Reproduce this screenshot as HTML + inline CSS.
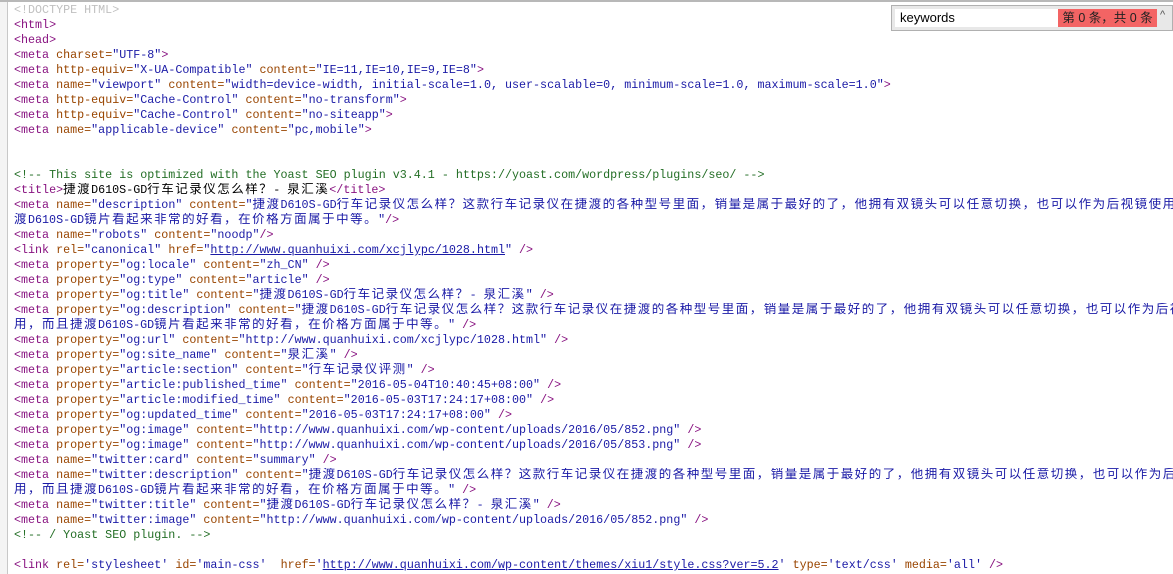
<!DOCTYPE html>
<html><head><meta charset="utf-8"><style>
html,body{margin:0;padding:0;background:#fff;width:1173px;height:574px;overflow:hidden;}
body{position:relative;font-family:"Liberation Mono","Noto Sans CJK SC",monospace;font-size:11.7px;}
.top{position:absolute;left:0;top:0;width:1173px;height:2px;background:#b8b8b8;}
.gut{position:absolute;left:0;top:2px;width:7px;height:572px;background:#f4f4f4;border-right:1px solid #c8c8c8;}
.code{position:absolute;left:14px;top:3px;width:1159px;}
.l{height:15px;line-height:15px;white-space:pre;overflow:hidden;color:#000;}
.t{color:#881280}.a{color:#994500}.v{color:#1a1aa6}.m{color:#236e25}.d{color:#c0c0c0}
.c{font-family:"Noto Sans CJK SC",sans-serif;font-size:12.5px;letter-spacing:1.5px;line-height:0}
.u{text-decoration:underline;color:#1a1aa6}
.sb{position:absolute;left:891px;top:5px;width:282px;height:26px;background:#e8e8e8;border:1px solid #b0b0b0;box-sizing:border-box;}
.sb .in{position:absolute;left:3px;top:3px;width:262px;height:18px;background:#fff;font-family:"Liberation Sans",sans-serif;font-size:13px;line-height:18px;padding-left:5px;box-sizing:border-box;color:#000}
.sb .r{position:absolute;left:163px;top:0;width:99px;height:18px;background:#f36464;font-family:"Liberation Sans","Noto Sans CJK SC",sans-serif;font-size:12.5px;line-height:18px;color:#222;text-align:center}
.sb .btn{position:absolute;left:268px;top:3px;font-size:11px;color:#555;font-family:"Liberation Sans",sans-serif}
</style></head><body>
<div class="top"></div><div class="gut"></div>
<div class="code">
<div class="l d">&lt;!DOCTYPE HTML&gt;</div>
<div class="l t">&lt;html&gt;</div>
<div class="l t">&lt;head&gt;</div>
<div class="l"><span class="t">&lt;meta</span> <span class="a">charset=</span><span class="v">"UTF-8"</span><span class="t">&gt;</span></div>
<div class="l"><span class="t">&lt;meta</span> <span class="a">http-equiv=</span><span class="v">"X-UA-Compatible"</span> <span class="a">content=</span><span class="v">"IE=11,IE=10,IE=9,IE=8"</span><span class="t">&gt;</span></div>
<div class="l"><span class="t">&lt;meta</span> <span class="a">name=</span><span class="v">"viewport"</span> <span class="a">content=</span><span class="v">"width=device-width, initial-scale=1.0, user-scalable=0, minimum-scale=1.0, maximum-scale=1.0"</span><span class="t">&gt;</span></div>
<div class="l"><span class="t">&lt;meta</span> <span class="a">http-equiv=</span><span class="v">"Cache-Control"</span> <span class="a">content=</span><span class="v">"no-transform"</span><span class="t">&gt;</span></div>
<div class="l"><span class="t">&lt;meta</span> <span class="a">http-equiv=</span><span class="v">"Cache-Control"</span> <span class="a">content=</span><span class="v">"no-siteapp"</span><span class="t">&gt;</span></div>
<div class="l"><span class="t">&lt;meta</span> <span class="a">name=</span><span class="v">"applicable-device"</span> <span class="a">content=</span><span class="v">"pc,mobile"</span><span class="t">&gt;</span></div>
<div class="l"> </div>
<div class="l"> </div>
<div class="l m">&lt;!-- This site is optimized with the Yoast SEO plugin v3.4.1 - https://yoast.com/wordpress/plugins/seo/ --&gt;</div>
<div class="l"><span class="t">&lt;title&gt;</span><span class="c">捷渡</span>D610S-GD<span class="c">行车记录仪怎么样？</span>- <span class="c">泉汇溪</span><span class="t">&lt;/title&gt;</span></div>
<div class="l"><span class="t">&lt;meta</span> <span class="a">name=</span><span class="v">"description"</span> <span class="a">content=</span><span class="v">"<span class="c">捷渡</span>D610S-GD<span class="c">行车记录仪怎么样？这款行车记录仪在捷渡的各种型号里面，销量是属于最好的了，他拥有双镜头可以任意切换，也可以作为后视镜使用，而且捷</span></span></div>
<div class="l v"><span class="c">渡</span>D610S-GD<span class="c">镜片看起来非常的好看，在价格方面属于中等。</span>"<span class="t">/&gt;</span></div>
<div class="l"><span class="t">&lt;meta</span> <span class="a">name=</span><span class="v">"robots"</span> <span class="a">content=</span><span class="v">"noodp"</span><span class="t">/&gt;</span></div>
<div class="l"><span class="t">&lt;link</span> <span class="a">rel=</span><span class="v">"canonical"</span> <span class="a">href=</span><span class="v">"<span class="u">http://www.quanhuixi.com/xcjlypc/1028.html</span>"</span> <span class="t">/&gt;</span></div>
<div class="l"><span class="t">&lt;meta</span> <span class="a">property=</span><span class="v">"og:locale"</span> <span class="a">content=</span><span class="v">"zh_CN"</span> <span class="t">/&gt;</span></div>
<div class="l"><span class="t">&lt;meta</span> <span class="a">property=</span><span class="v">"og:type"</span> <span class="a">content=</span><span class="v">"article"</span> <span class="t">/&gt;</span></div>
<div class="l"><span class="t">&lt;meta</span> <span class="a">property=</span><span class="v">"og:title"</span> <span class="a">content=</span><span class="v">"<span class="c">捷渡</span>D610S-GD<span class="c">行车记录仪怎么样？</span>- <span class="c">泉汇溪</span>"</span> <span class="t">/&gt;</span></div>
<div class="l"><span class="t">&lt;meta</span> <span class="a">property=</span><span class="v">"og:description"</span> <span class="a">content=</span><span class="v">"<span class="c">捷渡</span>D610S-GD<span class="c">行车记录仪怎么样？这款行车记录仪在捷渡的各种型号里面，销量是属于最好的了，他拥有双镜头可以任意切换，也可以作为后视镜使</span></span></div>
<div class="l v"><span class="c">用，而且捷渡</span>D610S-GD<span class="c">镜片看起来非常的好看，在价格方面属于中等。</span>" <span class="t">/&gt;</span></div>
<div class="l"><span class="t">&lt;meta</span> <span class="a">property=</span><span class="v">"og:url"</span> <span class="a">content=</span><span class="v">"http://www.quanhuixi.com/xcjlypc/1028.html"</span> <span class="t">/&gt;</span></div>
<div class="l"><span class="t">&lt;meta</span> <span class="a">property=</span><span class="v">"og:site_name"</span> <span class="a">content=</span><span class="v">"<span class="c">泉汇溪</span>"</span> <span class="t">/&gt;</span></div>
<div class="l"><span class="t">&lt;meta</span> <span class="a">property=</span><span class="v">"article:section"</span> <span class="a">content=</span><span class="v">"<span class="c">行车记录仪评测</span>"</span> <span class="t">/&gt;</span></div>
<div class="l"><span class="t">&lt;meta</span> <span class="a">property=</span><span class="v">"article:published_time"</span> <span class="a">content=</span><span class="v">"2016-05-04T10:40:45+08:00"</span> <span class="t">/&gt;</span></div>
<div class="l"><span class="t">&lt;meta</span> <span class="a">property=</span><span class="v">"article:modified_time"</span> <span class="a">content=</span><span class="v">"2016-05-03T17:24:17+08:00"</span> <span class="t">/&gt;</span></div>
<div class="l"><span class="t">&lt;meta</span> <span class="a">property=</span><span class="v">"og:updated_time"</span> <span class="a">content=</span><span class="v">"2016-05-03T17:24:17+08:00"</span> <span class="t">/&gt;</span></div>
<div class="l"><span class="t">&lt;meta</span> <span class="a">property=</span><span class="v">"og:image"</span> <span class="a">content=</span><span class="v">"http://www.quanhuixi.com/wp-content/uploads/2016/05/852.png"</span> <span class="t">/&gt;</span></div>
<div class="l"><span class="t">&lt;meta</span> <span class="a">property=</span><span class="v">"og:image"</span> <span class="a">content=</span><span class="v">"http://www.quanhuixi.com/wp-content/uploads/2016/05/853.png"</span> <span class="t">/&gt;</span></div>
<div class="l"><span class="t">&lt;meta</span> <span class="a">name=</span><span class="v">"twitter:card"</span> <span class="a">content=</span><span class="v">"summary"</span> <span class="t">/&gt;</span></div>
<div class="l"><span class="t">&lt;meta</span> <span class="a">name=</span><span class="v">"twitter:description"</span> <span class="a">content=</span><span class="v">"<span class="c">捷渡</span>D610S-GD<span class="c">行车记录仪怎么样？这款行车记录仪在捷渡的各种型号里面，销量是属于最好的了，他拥有双镜头可以任意切换，也可以作为后视镜使</span></span></div>
<div class="l v"><span class="c">用，而且捷渡</span>D610S-GD<span class="c">镜片看起来非常的好看，在价格方面属于中等。</span>" <span class="t">/&gt;</span></div>
<div class="l"><span class="t">&lt;meta</span> <span class="a">name=</span><span class="v">"twitter:title"</span> <span class="a">content=</span><span class="v">"<span class="c">捷渡</span>D610S-GD<span class="c">行车记录仪怎么样？</span>- <span class="c">泉汇溪</span>"</span> <span class="t">/&gt;</span></div>
<div class="l"><span class="t">&lt;meta</span> <span class="a">name=</span><span class="v">"twitter:image"</span> <span class="a">content=</span><span class="v">"http://www.quanhuixi.com/wp-content/uploads/2016/05/852.png"</span> <span class="t">/&gt;</span></div>
<div class="l m">&lt;!-- / Yoast SEO plugin. --&gt;</div>
<div class="l"> </div>
<div class="l"><span class="t">&lt;link</span> <span class="a">rel=</span><span class="v">'stylesheet'</span> <span class="a">id=</span><span class="v">'main-css'</span>  <span class="a">href=</span><span class="v">'<span class="u">http://www.quanhuixi.com/wp-content/themes/xiu1/style.css?ver=5.2</span>'</span> <span class="a">type=</span><span class="v">'text/css'</span> <span class="a">media=</span><span class="v">'all'</span> <span class="t">/&gt;</span></div>
</div>
<div class="sb"><div class="in">keywords<div class="r">第 0 条，共 0 条</div></div><div class="btn">^</div></div>
</body></html>
